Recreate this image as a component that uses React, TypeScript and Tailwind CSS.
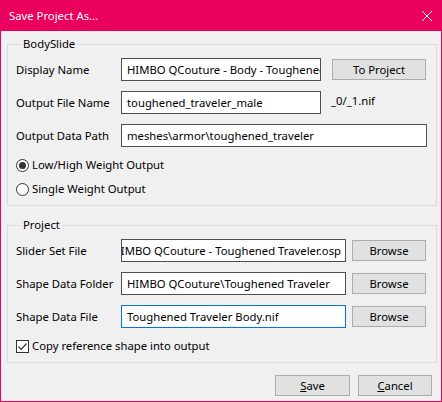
export default function App() {
  const input =
    "h-[23px] border border-[#4f4f4f] bg-white px-[5px] flex items-center overflow-hidden whitespace-nowrap";
  const btn =
    "h-[21px] border border-[#adadad] bg-[#e1e1e1] flex items-center justify-center";
  return (
    <div className="w-[442px] h-[402px] bg-[#ea005e] px-px pb-px flex flex-col font-['Noto_Sans',sans-serif] text-[11.3px] text-black leading-none">
      <div className="h-[31px] flex items-center justify-between pl-[8px] pr-[9px] text-white">
        <span>Save Project As...</span>
        <svg width="10" height="10" viewBox="0 0 10 10">
          <path d="M0 0L10 10M10 0L0 10" stroke="white" strokeWidth="1" />
        </svg>
      </div>
      <div className="flex-1 bg-[#f0f0f0] flex flex-col pl-[6px] pr-[4px]">
        <fieldset className="mt-[5px] border border-[#dcdcdc] px-[8px] pb-[4px]">
          <legend className="ml-[5px] px-[2px] h-[16px] leading-[16px]">BodySlide</legend>
          <div className="pt-[6px] flex flex-col gap-[10px]">
            <div className="flex items-center h-[23px]">
              <div className="w-[105px]">Display Name</div>
              <div className={`${input} w-[200px]`}>HIMBO QCouture - Body - Toughened Traveler</div>
              <div className={`${btn} ml-[11px] w-[94px]`}>To Project</div>
            </div>
            <div className="flex items-center h-[23px]">
              <div className="w-[105px]">Output File Name</div>
              <div className={`${input} w-[200px]`}>toughened_traveler_male</div>
              <div className="ml-[10px] self-start mt-[4px]">_0/_1.nif</div>
            </div>
            <div className="flex items-center h-[23px]">
              <div className="w-[105px]">Output Data Path</div>
              <div className={`${input} w-[306px]`}>meshes\armor\toughened_traveler</div>
            </div>
          </div>
          <div className="mt-[6px] flex flex-col">
            <div className="h-[24px] flex items-center">
              <div className="w-[13px] h-[13px] rounded-full border border-[#333] bg-white flex items-center justify-center">
                <div className="w-[7px] h-[7px] rounded-full bg-[#333]" />
              </div>
              <span className="ml-[3px]">Low/High Weight Output</span>
            </div>
            <div className="h-[24px] flex items-center">
              <div className="w-[13px] h-[13px] rounded-full border border-[#333] bg-white" />
              <span className="ml-[3px]">Single Weight Output</span>
            </div>
          </div>
        </fieldset>
        <fieldset className="mt-[11px] border border-[#dcdcdc] px-[8px] pb-[4px]">
          <legend className="ml-[5px] px-[2px] h-[16px] leading-[16px]">Project</legend>
          <div className="pt-[6px] flex flex-col gap-[10px]">
            <div className="flex items-center h-[23px]">
              <div className="w-[105px]">Slider Set File</div>
              <div className={`${input} w-[225px] justify-end pr-[4px]`}>
                <span className="shrink-0">HIMBO QCouture - Toughened Traveler.osp</span>
              </div>
              <div className={`${btn} ml-[6px] w-[74px]`}>Browse</div>
            </div>
            <div className="flex items-center h-[23px]">
              <div className="w-[105px]">Shape Data Folder</div>
              <div className={`${input} w-[225px]`}>HIMBO QCouture\Toughened Traveler</div>
              <div className={`${btn} ml-[6px] w-[74px]`}>Browse</div>
            </div>
            <div className="flex items-center h-[23px]">
              <div className="w-[105px]">Shape Data File</div>
              <div className="h-[23px] border border-[#0078d7] bg-white px-[5px] flex items-center overflow-hidden whitespace-nowrap w-[225px]">
                Toughened Traveler Body.nif
              </div>
              <div className={`${btn} ml-[6px] w-[74px]`}>Browse</div>
            </div>
          </div>
          <div className="mt-[6px] h-[24px] flex items-center">
            <div className="w-[13px] h-[13px] border border-[#333] bg-white flex items-center justify-center">
              <svg width="11" height="11" viewBox="0 0 11 11">
                <path d="M1.5 5.5L4.2 8.3L9.5 2.5" fill="none" stroke="#333" strokeWidth="1.2" />
              </svg>
            </div>
            <span className="ml-[3px]">Copy reference shape into output</span>
          </div>
        </fieldset>
        <div className="mt-[12px] flex justify-end gap-[8px] pr-[5px]">
          <div className={`${btn} w-[75px]`}>
            <span><span className="underline">S</span>ave</span>
          </div>
          <div className={`${btn} w-[74px]`}>
            <span><span className="underline">C</span>ancel</span>
          </div>
        </div>
      </div>
    </div>
  );
}
